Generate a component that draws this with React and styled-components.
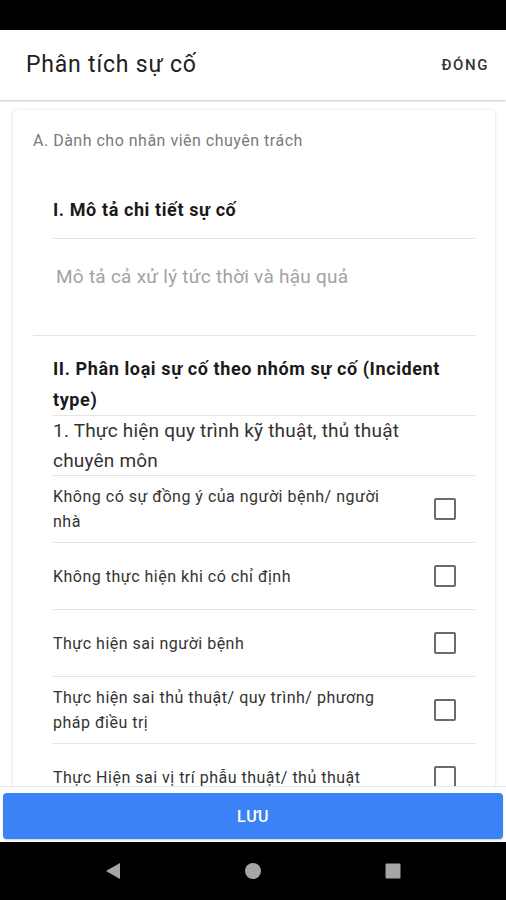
import React from "react";
import styled, { createGlobalStyle } from "styled-components";

const Global = createGlobalStyle`
  html, body { margin: 0; padding: 0; background: #000; }
  body { font-family: Roboto, "Noto Sans", "Liberation Sans", sans-serif; }
  * { box-sizing: border-box; }
`;

const Screen = styled.div`
  width: 506px;
  height: 900px;
  display: flex;
  flex-direction: column;
  background: #fff;
  overflow: hidden;
`;

const StatusBar = styled.div`
  height: 30px;
  flex: none;
  background: #000;
`;

const Header = styled.header`
  height: 70px;
  flex: none;
  display: flex;
  align-items: center;
  justify-content: space-between;
  padding: 0 17px 0 26px;
  background: #fff;
  box-shadow: 0 1px 2px rgba(0, 0, 0, 0.22);
  position: relative;
  z-index: 2;
`;

const Title = styled.h1`
  margin: 0;
  font-size: 23px;
  letter-spacing: 0.8px;
  font-weight: 400;
  color: #212121;
  padding-bottom: 2px;
`;

const CloseButton = styled.button`
  border: 0;
  background: none;
  padding: 0;
  font-family: inherit;
  font-size: 15px;
  font-weight: 500;
  letter-spacing: 1.6px;
  color: #333;
`;

const Content = styled.main`
  flex: 1;
  overflow: hidden;
  padding: 10px 11px 0 13px;
  background: #fff;
`;

const Card = styled.section`
  background: #fff;
  border-radius: 3px;
  box-shadow: 0 0 3px rgba(0, 0, 0, 0.16), 0 1px 2px rgba(0, 0, 0, 0.06);
  padding: 21px 20px 20px 20px;
`;

const Caption = styled.div`
  font-size: 16px;
  letter-spacing: 0.5px;
  line-height: 20px;
  color: #7a7a7a;
`;

const Indented = styled.div`
  margin-left: 20px;
`;

const SectionTitle = styled.h2`
  margin: 0;
  font-size: ${(p) => p.$size || 18}px;
  letter-spacing: ${(p) => p.$ls || 0.6}px;
  line-height: ${(p) => p.$lh || 24}px;
  font-weight: 700;
  color: #1a1a1a;
  padding: ${(p) => p.$pad || "0"};
  border-bottom: 1px solid #e3e3e3;
`;

const DescField = styled.div`
  height: 97px;
  padding: 26px 0 0 23px;
  font-size: 19px;
  letter-spacing: 0.25px;
  line-height: 24px;
  color: #a3a3a3;
  border-bottom: 1px solid #e3e3e3;
`;

const GroupTitle = styled.div`
  font-size: 19px;
  letter-spacing: 0.2px;
  line-height: 29.5px;
  color: #333;
  padding-right: 30px;
  border-bottom: 1px solid #e3e3e3;
`;

const Row = styled.label`
  display: flex;
  align-items: center;
  min-height: 67px;
  padding: 8px 0;
  border-bottom: 1px solid #e3e3e3;
`;

const RowText = styled.span`
  width: 350px;
  font-size: 16px;
  letter-spacing: 0.5px;
  line-height: 25px;
  color: #333;
`;

const CheckCell = styled.span`
  flex: 1;
  display: flex;
  justify-content: flex-end;
  padding-right: 19px;
`;

const Box = styled.span`
  width: 22px;
  height: 22px;
  border: 2px solid #6b6b6b;
  border-radius: 2px;
  background: #fff;
`;

const Footer = styled.div`
  flex: none;
  padding: 6px 3px 3px;
  background: #fff;
  border-top: 1px solid #e6e6e6;
  position: relative;
  z-index: 2;
`;

const SaveButton = styled.button`
  width: 100%;
  height: 46px;
  border: 0;
  border-radius: 4px;
  background: #3b82f6;
  color: #fff;
  font-family: inherit;
  font-size: 16px;
  font-weight: 500;
  letter-spacing: 0.6px;
  box-shadow: 0 1px 2px rgba(0, 0, 0, 0.2);
`;

const NavBar = styled.nav`
  height: 58px;
  flex: none;
  background: #000;
  display: flex;
  align-items: center;
  justify-content: center;
  gap: 122px;
`;

const NavIcon = styled.svg`
  width: 18px;
  height: 18px;
  fill: #a6a6a6;
`;

const items = [
  "Không có sự đồng ý của người bệnh/ người nhà",
  "Không thực hiện khi có chỉ định",
  "Thực hiện sai người bệnh",
  "Thực hiện sai thủ thuật/ quy trình/ phương pháp điều trị",
  "Thực Hiện sai vị trí phẫu thuật/ thủ thuật",
];

export default function App() {
  return (
    <Screen>
      <Global />
      <StatusBar />
      <Header>
        <Title>Phân tích sự cố</Title>
        <CloseButton>ĐÓNG</CloseButton>
      </Header>
      <Content>
        <Card>
          <Caption>A. Dành cho nhân viên chuyên trách</Caption>
          <Indented style={{ marginTop: 35 }}>
            <SectionTitle $pad="12px 0 16px">I. Mô tả chi tiết sự cố</SectionTitle>
          </Indented>
          <DescField>Mô tả cả xử lý tức thời và hậu quả</DescField>
          <Indented>
            <SectionTitle $size={18} $ls={0.6} $lh={31} $pad="17px 0 0">
              II. Phân loại sự cố theo nhóm sự cố (Incident type)
            </SectionTitle>
            <GroupTitle>1. Thực hiện quy trình kỹ thuật, thủ thuật chuyên môn</GroupTitle>
            {items.map((t) => (
              <Row key={t}>
                <RowText>{t}</RowText>
                <CheckCell>
                  <Box />
                </CheckCell>
              </Row>
            ))}
          </Indented>
        </Card>
      </Content>
      <Footer>
        <SaveButton>LƯU</SaveButton>
      </Footer>
      <NavBar>
        <NavIcon viewBox="0 0 18 18">
          <path d="M16 1 L16 17 L2 9 Z" />
        </NavIcon>
        <NavIcon viewBox="0 0 18 18">
          <circle cx="9" cy="9" r="8" />
        </NavIcon>
        <NavIcon viewBox="0 0 18 18">
          <rect x="1.5" y="1.5" width="15" height="15" rx="1" />
        </NavIcon>
      </NavBar>
    </Screen>
  );
}
